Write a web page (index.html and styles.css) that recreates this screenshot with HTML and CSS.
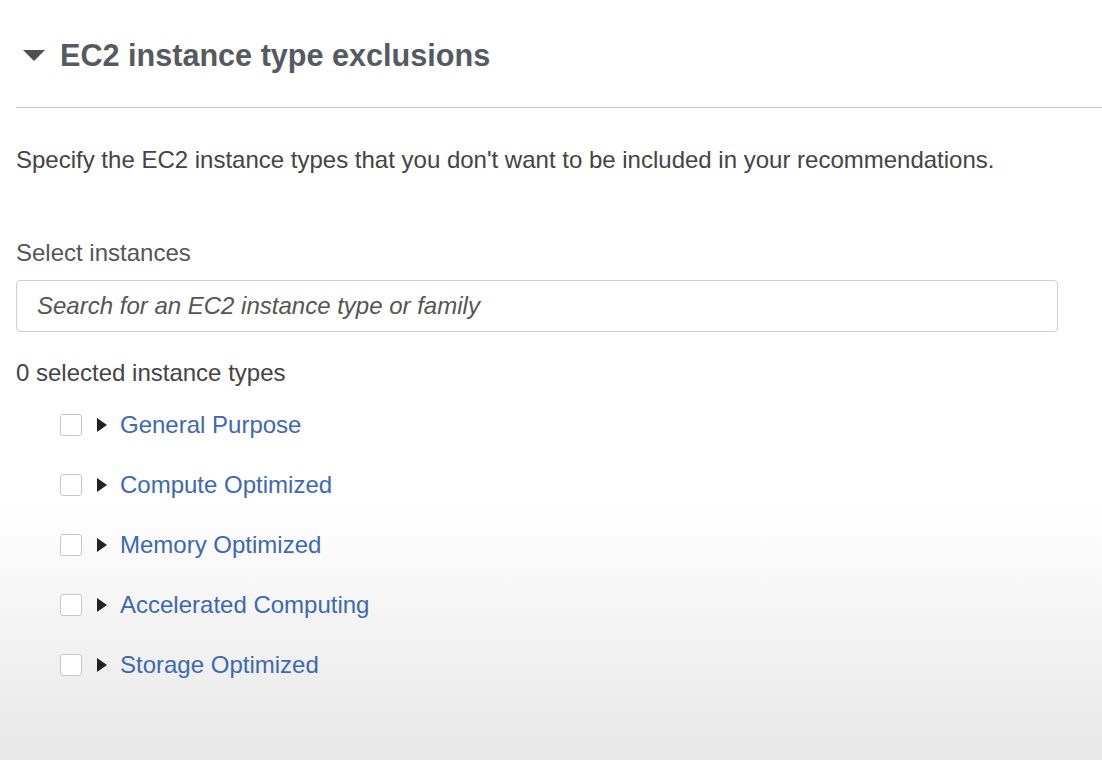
FILE: index.html
```html
<!DOCTYPE html>
<html lang="en">

<head>
  <meta charset="UTF-8" />
  <meta name="viewport" content="width=device-width, initial-scale=1.0" />
  <title>EC2 instance type exclusions</title>
  <link rel="stylesheet" href="styles.css">
</head>

<body>
  <div class="section">
    <h2 class="section-title">
      <span class="caret-down"></span>
      EC2 instance type exclusions
    </h2>
    <div class="section-body">
      <p class="description">Specify the EC2 instance types that you don't want to be included in your recommendations.</p>

      <label class="field-label" for="search">Select instances</label>
      <input type="text" id="search" placeholder="Search for an EC2 instance type or family">

      <p class="count">0 selected instance types</p>

      <ul class="families">
        <li><span class="checkbox"></span><span class="caret-right"></span><a href="#">General Purpose</a></li>
        <li><span class="checkbox"></span><span class="caret-right"></span><a href="#">Compute Optimized</a></li>
        <li><span class="checkbox"></span><span class="caret-right"></span><a href="#">Memory Optimized</a></li>
        <li><span class="checkbox"></span><span class="caret-right"></span><a href="#">Accelerated Computing</a></li>
        <li><span class="checkbox"></span><span class="caret-right"></span><a href="#">Storage Optimized</a></li>
      </ul>
    </div>
  </div>
</body>

</html>
```

FILE: styles.css
```css
body {
  margin: 0;
  min-height: 760px;
  font-family: "Liberation Sans", Arial, sans-serif;
  color: #444;
  background: linear-gradient(to bottom, #fff 0px, #fff 500px, #e7e7e7 760px);
}

.section {
  padding-left: 16px;
}

.section-title {
  display: flex;
  align-items: center;
  gap: 15px;
  margin: 0;
  height: 108px;
  padding: 3px 0 0 7px;
  box-sizing: border-box;
  border-bottom: 1px solid #c8c8c8;
  font-size: 30.6px;
  font-weight: bold;
  color: #555a60;
}

.caret-down {
  width: 0;
  height: 0;
  margin-top: 1px;
  border-left: 11px solid transparent;
  border-right: 11px solid transparent;
  border-top: 11px solid #505050;
}

.section-body {
  padding-top: 38px;
}

.description {
  margin: 0;
  font-size: 24px;
  line-height: 28px;
  color: #444;
}

.field-label {
  display: block;
  margin-top: 65px;
  font-size: 24px;
  line-height: 28px;
  color: #555;
}

input[type=text] {
  display: block;
  width: 1042px;
  height: 52px;
  margin-top: 13px;
  padding: 0 20px;
  box-sizing: border-box;
  border: 1px solid #cfcfcf;
  border-radius: 4px;
  outline: none;
  font-family: inherit;
  font-size: 24px;
  font-style: italic;
  color: #444;
}

input[type=text]::placeholder {
  color: #555;
}

.count {
  margin: 27px 0 0;
  font-size: 24px;
  line-height: 28px;
  color: #444;
}

.families {
  list-style: none;
  margin: 0;
  padding: 8px 0 0 44px;
}

.families li {
  display: flex;
  align-items: center;
  height: 60px;
}

.checkbox {
  width: 22px;
  height: 22px;
  box-sizing: border-box;
  border: 1px solid #c8c8c8;
  border-radius: 3px;
  background: #fff;
}

.caret-right {
  width: 0;
  height: 0;
  margin: 0 13px 0 15px;
  border-top: 7px solid transparent;
  border-bottom: 7px solid transparent;
  border-left: 10px solid #222;
}

.families a {
  font-size: 24px;
  color: #3e68b0;
  text-decoration: none;
}
```
